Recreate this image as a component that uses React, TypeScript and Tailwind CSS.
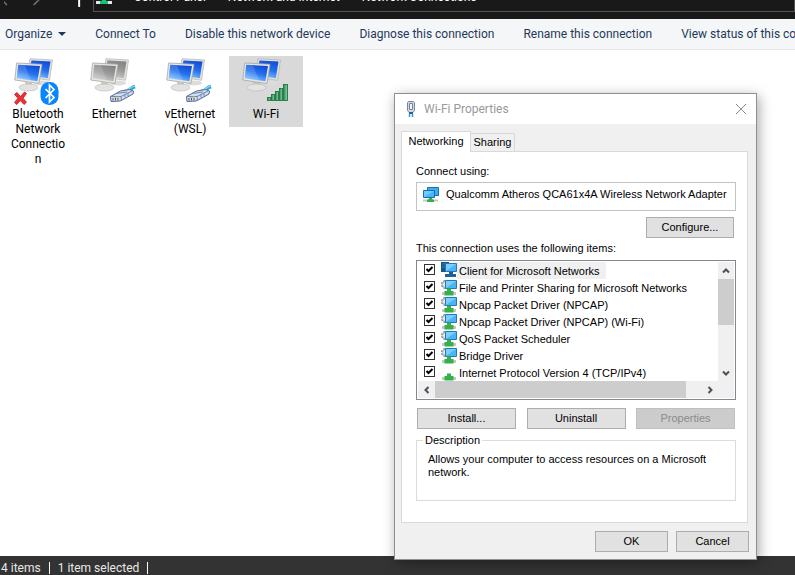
import React, { useState } from 'react';
import clsx from 'clsx';

type Overlay = 'bluetooth' | 'cable' | 'signal';

interface Connection {
  id: string;
  label: string;
  overlay: Overlay;
  enabled: boolean;
}

const connections: Connection[] = [
  { id: 'bluetooth', label: 'Bluetooth Network Connection', overlay: 'bluetooth', enabled: true },
  { id: 'ethernet', label: 'Ethernet', overlay: 'cable', enabled: false },
  { id: 'vethernet', label: 'vEthernet (WSL)', overlay: 'cable', enabled: true },
  { id: 'wifi', label: 'Wi-Fi', overlay: 'signal', enabled: true }
];

const commands = [
  'Connect To',
  'Disable this network device',
  'Diagnose this connection',
  'Rename this connection',
  'View status of this connection'
];

const items = [
  { label: 'Client for Microsoft Networks', icon: 'client' },
  { label: 'File and Printer Sharing for Microsoft Networks', icon: 'service' },
  { label: 'Npcap Packet Driver (NPCAP)', icon: 'service' },
  { label: 'Npcap Packet Driver (NPCAP) (Wi-Fi)', icon: 'service' },
  { label: 'QoS Packet Scheduler', icon: 'service' },
  { label: 'Bridge Driver', icon: 'service' },
  { label: 'Internet Protocol Version 4 (TCP/IPv4)', icon: 'protocol' }
];

const ConnectionIcon: React.FC<{ overlay: Overlay; enabled: boolean }> = ({ overlay, enabled }) => {
  const screen = enabled ? 'url(#screen-on)' : 'url(#screen-off)';
  return (
    <svg className="h-12 w-12 shrink-0 overflow-visible" viewBox="0 0 48 48" aria-hidden="true">
      <defs>
        <linearGradient id="screen-on" x1="0.75" y1="0" x2="0.35" y2="1">
          <stop offset="0" stopColor="#0f4ad4" />
          <stop offset="0.5" stopColor="#2470ee" />
          <stop offset="1" stopColor="#86c8ff" />
        </linearGradient>
        <linearGradient id="screen-off" x1="0.75" y1="0" x2="0.35" y2="1">
          <stop offset="0" stopColor="#828282" />
          <stop offset="0.5" stopColor="#9b9b9b" />
          <stop offset="1" stopColor="#cfcfcf" />
        </linearGradient>
        <linearGradient id="bars" x1="0" y1="0" x2="1" y2="0">
          <stop offset="0" stopColor="#2f8a55" />
          <stop offset="1" stopColor="#8fd3a4" />
        </linearGradient>
      </defs>
      <ellipse cx="28" cy="27" rx="8" ry="2.5" fill="#dcdcda" />
      <path d="M16 2.700 38.500 4 35.500 24.300 13 21Z" fill="#e2e2df" stroke="#b0b0ad" strokeWidth=".7" />
      <path d="M17.500 4.500 36.500 5.600 33.800 22.200 14.500 19.500Z" fill={screen} />
      <path d="m11 26 7 1 1 4h-7Z" fill="#c4c4c1" />
      <ellipse cx="14.500" cy="31.500" rx="9.500" ry="3.500" fill="#e3e3e1" stroke="#b9b9b6" strokeWidth=".6" />
      <path d="M2.600 7 28 8.300 25 27.500.8 24Z" fill="#e8e8e5" stroke="#a5a5a2" strokeWidth=".8" />
      <path d="M4.200 8.800 26 10 23.400 25.300 2.700 22.300Z" fill={screen} />
      <path d="M4.200 8.800 11 9.200 17 24.400 2.700 22.300Z" fill="#fff" opacity=".15" />
      {overlay === 'bluetooth' && (
        <>
          <path
            d="m.5 38.500 2.500-2 3.500 4 4-4.500 2 1.500-3.500 4.700 3.500 4-2.500 2.300-3.700-4-3.500 4-2.300-2 3.500-4.300Z"
            fill="#ee3036"
            stroke="#c0151c"
            strokeWidth=".8"
          />
          <rect x="26.500" y="26" width="18" height="23" rx="8.500" fill="#0a84ff" />
          <path d="m31.500 33 8.500 8.500-4.500 4.500v-17l4.500 4.500-8.500 8.500" fill="none" stroke="#fff" strokeWidth="1.700" />
        </>
      )}
      {overlay === 'cable' && (
        <>
          <path d="M35 35.500c5-1 5-3.500 10-5" fill="none" stroke="#2aa7d8" strokeWidth="3.500" />
          <path d="M36 34c4-1 5-3 9-4" fill="none" stroke="#8adcf4" strokeWidth="1.200" />
          <path d="m20.500 40.500 10-5.500 9-1.500 4 1.500-.5 3-9 5-4 2-9 .5Z" fill="#d3deee" stroke="#536a92" />
          <path d="m20.500 40.500 10.500 0 11-5.500M31 40.500l.5 4M26 37.500l11-1.500M35 38.500v3M38 37v3" fill="none" stroke="#6f86ae" />
          <path d="M23 42v2.500M25.500 42v2.500M28 42v2.500" stroke="#40557c" />
          <path d="m24 41.500 5-.5" stroke="#d8bd61" strokeWidth="1.200" />
        </>
      )}
      {overlay === 'signal' && (
        <g fill="url(#bars)" stroke="#1f7542" strokeWidth=".9">
          <rect x="25.500" y="41.500" width="3" height="3" />
          <rect x="29.500" y="38.500" width="3" height="6" />
          <rect x="33.500" y="35.500" width="3" height="9" />
          <rect x="37.500" y="32.500" width="3" height="12" />
          <rect x="41.500" y="28.500" width="4" height="16" />
        </g>
      )}
    </svg>
  );
};

const ItemIcon: React.FC<{ kind: string }> = ({ kind }) => (
  <svg className="h-[17px] w-4 shrink-0" viewBox="0 0 16 17" aria-hidden="true">
    {kind === 'client' && (
      <>
        <path d="M0 0h8v10H0Z" fill="#14558b" />
        <path d="M1 2h4M1 5h3" stroke="#2f86c5" />
      </>
    )}
    {kind === 'service' && (
      <>
        <circle cx="4.500" cy="5.500" r="3.800" fill="#f2f2f2" stroke="#8c8c8c" strokeWidth="1.500" strokeDasharray="2 1" />
        <circle cx="4.500" cy="5.500" r="2.800" fill="none" stroke="#b8b8b8" />
      </>
    )}
    {kind !== 'protocol' && (
      <>
        <path d="M4.500 1.500h11v8h-11Z" fill="#49b5f5" stroke="#2378b5" />
        <path d="M5 2h10L5 9Z" fill="#7bcfff" />
      </>
    )}
    {kind === 'client' ? (
      <>
        <path d="M8 10h4v3H8Z" fill="#1d5f94" />
        <path d="M4 12h11v3H4Z" fill="#17649f" />
      </>
    ) : (
      <>
        <path d="M1 13h14v3H1Z" fill="#c4c7c4" />
        <path d="M6 9.500h4V12h2.500v4.500h-9V12H6Z" fill="#35b14a" />
      </>
    )}
  </svg>
);

const AdapterIcon = () => (
  <svg className="h-4 w-4 shrink-0" viewBox="0 0 16 16" aria-hidden="true">
    <path d="M4.500.5h11v8h-11Z" fill="#39aef2" stroke="#1c6ea8" />
    <path d="M.5 3.500h11v7H.5Z" fill="#45b8f7" stroke="#1c6ea8" />
    <path d="M1 4h10L1 10Z" fill="#6ecbff" />
    <path d="M0 12.500h15v2H0Z" fill="#c5c8c5" />
    <path d="M6 11h3v1l2 1v2H4v-2l2-1Z" fill="#36ad48" />
  </svg>
);

const PlugIcon = () => (
  <svg className="h-4 w-4 shrink-0" viewBox="0 0 16 16" aria-hidden="true">
    <path d="M5.500.5h5l1 1v8l-1.500 2H6l-1.500-2v-8Z" fill="#cfd8e2" stroke="#75879a" />
    <path d="M6.500 2.500h3v6h-3Z" fill="#eef2f6" stroke="#75879a" />
    <path d="M6 11h4v2H6Z" fill="#2f5f83" />
    <path d="M6.500 13v3M9.500 13v3" stroke="#2ba3d4" strokeWidth="1.500" />
  </svg>
);

const Chevron: React.FC<{ d: string }> = ({ d }) => (
  <svg className="h-2 w-2" viewBox="0 0 8 8" aria-hidden="true">
    <path d={d} fill="none" stroke="#505050" strokeWidth="2" />
  </svg>
);

const DialogButton: React.FC<{ label: string; className: string; disabled?: boolean }> = ({
  label,
  className,
  disabled
}) => (
  <button
    type="button"
    disabled={disabled}
    className={clsx(
      'h-[21px] border',
      disabled ? 'border-[#bfbfbf] bg-[#cccccc] text-[#8b8b8b]' : 'border-[#adadad] bg-[#e1e1e1]',
      className
    )}
  >
    {label}
  </button>
);

const AddressBar = () => (
  <header className="flex h-[19px] items-end overflow-hidden bg-[#191919] text-xs text-white">
    <div className="flex h-[30px] w-[93px] shrink-0 items-center pb-1 pl-1">
      <svg className="h-[22px] w-[90px]" viewBox="0 0 90 22" fill="none" aria-hidden="true">
        <path d="m3 4-5 5 5 5M30 4l5 5-5 5" stroke="#777" strokeWidth="1.500" />
        <path d="M76 4v12" stroke="#fff" strokeWidth="2" />
      </svg>
    </div>
    <div className="mb-[7px] flex h-[30px] flex-1 items-center border border-[#535353] pl-[2px]">
      <svg className="mr-[22px] h-4 w-4 shrink-0" viewBox="0 0 16 16" aria-hidden="true">
        <path d="M1 1h14v8H1Z" fill="#49b5f5" />
        <path d="M0 12h16v3H0Z" fill="#e5e5e5" />
        <path d="M6 9h4v3h2v3H4v-3h2Z" fill="#17c37b" />
      </svg>
      <nav className="flex gap-[22px] whitespace-nowrap">
        <a href="#control-panel">Control Panel</a>
        <a href="#network">Network and Internet</a>
        <a href="#connections">Network Connections</a>
      </nav>
    </div>
  </header>
);

const PropertiesDialog = () => {
  const [tab, setTab] = useState('Networking');

  return (
    <section
      role="dialog"
      aria-label="Wi-Fi Properties"
      className="absolute left-[394px] top-[93px] w-[363px] border border-[#8f8f8f] bg-[#f0f0f0] font-['Liberation_Sans',Arial,sans-serif] text-[11px] leading-[13px] shadow-[2px_3px_12px_rgba(0,0,0,0.35)]"
    >
      <div className="flex h-[30px] items-center gap-[5px] bg-white px-2">
        <PlugIcon />
        <h1 className="flex-1 font-[Roboto,'Open_Sans',sans-serif] text-xs text-[#999]">Wi-Fi Properties</h1>
        <button type="button" aria-label="Close" className="p-px">
          <svg className="h-3 w-3" viewBox="0 0 12 12" aria-hidden="true">
            <path d="m1 1 10 10M11 1 1 11" stroke="#8b8b8b" />
          </svg>
        </button>
      </div>

      <div className="py-[7px] pl-[6px] pr-[7px]">
        <div role="tablist" className="flex items-end">
          {['Networking', 'Sharing'].map((name) => (
            <button
              key={name}
              type="button"
              role="tab"
              aria-selected={tab === name}
              onClick={() => setTab(name)}
              className={clsx(
                'border border-b-0 border-[#d9d9d9]',
                tab === name
                  ? 'relative z-10 -mb-px h-[21px] w-[70px] bg-white pb-[2px]'
                  : 'h-[18px] w-[44px] border-l-0 bg-[#f0f0f0]'
              )}
            >
              {name}
            </button>
          ))}
        </div>

        <div role="tabpanel" className="mr-px border border-[#d9d9d9] bg-white pb-[21px] pl-[14px] pr-[11px] pt-[13px]">
          <p>Connect using:</p>
          <div className="mt-1 flex h-[29px] items-center gap-[7px] border border-[#c3c3c3] pb-1 pl-[6px]">
            <AdapterIcon />
            <span>Qualcomm Atheros QCA61x4A Wireless Network Adapter</span>
          </div>
          <div className="mt-[6px] flex justify-end pr-[2px]">
            <DialogButton label="Configure..." className="w-[88px]" />
          </div>

          <p className="mt-1">This connection uses the following items:</p>
          <div className="mt-[5px] border border-[#828790] p-px">
            <div className="flex">
              <ul className="min-w-0 flex-1">
                {items.map((item, index) => (
                  <li key={item.label}>
                    <label className="flex h-[17px] items-center">
                      <span className="mx-[6px] mb-[2px] grid shrink-0">
                        <input
                          type="checkbox"
                          defaultChecked
                          className="peer col-start-1 row-start-1 h-[11px] w-[11px] appearance-none border border-[#333] bg-white"
                        />
                        <svg
                          className="pointer-events-none invisible col-start-1 row-start-1 h-[11px] w-[11px] peer-checked:visible"
                          viewBox="0 0 11 11"
                          aria-hidden="true"
                        >
                          <path d="m2.500 5 2 2 4-4" fill="none" stroke="#000" strokeWidth="2" />
                        </svg>
                      </span>
                      <ItemIcon kind={item.icon} />
                      <span
                        className={clsx(
                          'flex h-full items-center whitespace-nowrap pl-[2px] pr-[6px] pt-[2px]',
                          index === 0 && 'bg-[#f0f0f0]'
                        )}
                      >
                        {item.label}
                      </span>
                    </label>
                  </li>
                ))}
              </ul>
              <div className="flex w-4 flex-col bg-[#f0f0f0]">
                <button type="button" aria-label="Scroll up" className="grid h-[17px] place-items-center">
                  <Chevron d="m1 5.500 3-3 3 3" />
                </button>
                <div className="h-[46px] bg-[#cdcdcd]" />
                <div className="flex-1" />
                <button type="button" aria-label="Scroll down" className="grid h-[17px] place-items-center">
                  <Chevron d="m1 2.500 3 3 3-3" />
                </button>
              </div>
            </div>
            <div className="flex h-[17px] bg-[#f0f0f0] pr-4">
              <button type="button" aria-label="Scroll left" className="grid w-[17px] place-items-center">
                <Chevron d="m5.500 1-3 3 3 3" />
              </button>
              <div className="flex-1 bg-[#cdcdcd]" />
              <div className="w-[15px]" />
              <button type="button" aria-label="Scroll right" className="grid w-[17px] place-items-center">
                <Chevron d="m2.500 1 3 3-3 3" />
              </button>
            </div>
          </div>

          <div className="mt-2 flex justify-between px-px">
            <DialogButton label="Install..." className="w-[99px]" />
            <DialogButton label="Uninstall" className="w-[99px]" />
            <DialogButton label="Properties" className="w-[99px]" disabled />
          </div>

          <fieldset className="mt-[5px] h-[67px] border border-[#dcdcdc] px-[11px] pt-[6px]">
            <legend className="-ml-[5px] px-[2px]">Description</legend>
            <p className="max-w-[285px]">Allows your computer to access resources on a Microsoft network.</p>
          </fieldset>
        </div>

        <div className="mt-2 flex justify-end gap-2">
          <DialogButton label="OK" className="w-[73px]" />
          <DialogButton label="Cancel" className="w-[73px]" />
        </div>
      </div>
    </section>
  );
};

export default function App() {
  const [selected, setSelected] = useState('wifi');

  return (
    <div className="relative flex min-h-screen flex-col overflow-hidden bg-white font-[Roboto,'Open_Sans',sans-serif] text-xs text-black">
      <AddressBar />

      <nav className="flex h-[31px] items-center gap-[29px] overflow-hidden whitespace-nowrap border-b border-[#e5e5e5] bg-[#f5f6f7] pl-[5px] text-[#1e395b]">
        <button type="button" className="flex shrink-0 items-center gap-[6px]">
          Organize
          <svg className="h-1 w-2" viewBox="0 0 8 4" aria-hidden="true">
            <path d="M0 0h8L4 4Z" fill="#1e395b" />
          </svg>
        </button>
        {commands.map((command) => (
          <button key={command} type="button" className="shrink-0">
            {command}
          </button>
        ))}
      </nav>

      <main className="flex flex-1 items-start gap-[2px] pl-px pt-[6px]">
        {connections.map((connection) => (
          <button
            key={connection.id}
            type="button"
            onClick={() => setSelected(connection.id)}
            className={clsx(
              'flex min-h-[71px] w-[74px] flex-col items-center px-2 leading-[15px]',
              selected === connection.id && 'bg-[#d9d9d9]'
            )}
          >
            <ConnectionIcon overlay={connection.overlay} enabled={connection.enabled} />
            <span className="mt-[3px] w-full break-words">{connection.label}</span>
          </button>
        ))}
      </main>

      <footer className="flex h-[19px] items-center bg-[#333] pl-px pt-1 text-[#e8e8e8]">
        <span className="border-r border-white pr-2 leading-3">4 items</span>
        <span className="border-r border-white px-2 leading-3">1 item selected</span>
      </footer>

      <PropertiesDialog />
    </div>
  );
}
